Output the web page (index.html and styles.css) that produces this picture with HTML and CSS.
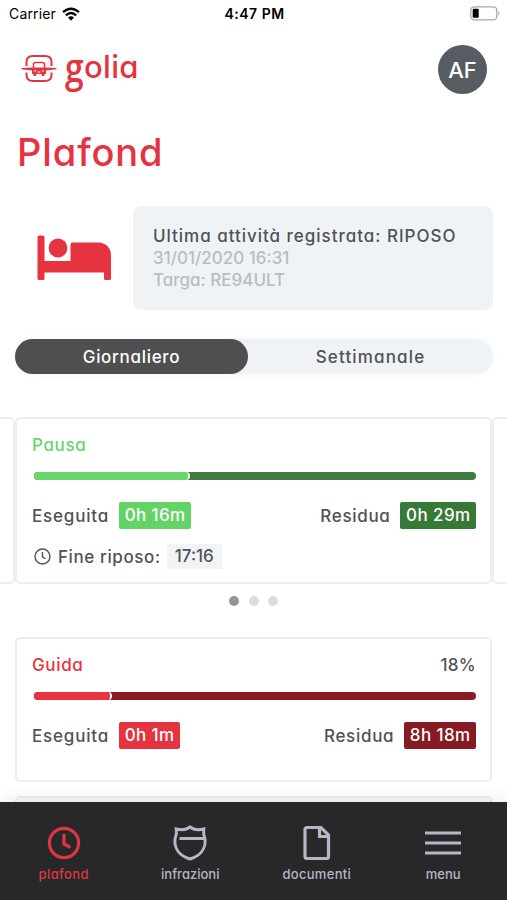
FILE: index.html
```html
<!DOCTYPE html>
<html lang="it">
<head>
<meta charset="utf-8">
<meta name="viewport" content="width=device-width">
<title>Plafond</title>
<link rel="stylesheet" href="styles.css">
</head>
<body>
<div class="app">
  <div class="status">
    <div class="carrier"><span>Carrier</span>
      <svg width="18" height="14" viewBox="0 0 18 14"><g fill="none" stroke="#000" stroke-width="2.4"><path d="M1 5.2Q9-1.8 17 5.2"/><path d="M3.8 8.4Q9 3.8 14.2 8.4"/></g><path d="M6 10.6Q9 8 12 10.6L9 13.8Z"/></svg>
    </div>
    <div class="time">4:47 PM</div>
    <svg class="battery" width="31" height="15" viewBox="0 0 31 15"><rect x=".8" y=".8" width="26" height="13" rx="3.5" fill="#fff" stroke="#aaa" stroke-width="1.3"/><rect x="2.7" y="2.8" width="6" height="9" rx="1" /><path d="M28.4 5q2 2.500 0 5z" fill="#aaa"/></svg>
  </div>
  <header class="header">
    <div class="logo">
      <svg width="36" height="30" viewBox="0 0 36 30"><g fill="none" stroke="#e23540" stroke-width="2"><path d="M5.500 12V8Q5.500 2 12 2H24Q30.500 2 30.500 8V12M5.500 18.500V21Q5.500 27 12 27H24Q30.500 27 30.500 21V18.500"/><path d="M12.500 14V10.500Q12.500 8.500 14.500 8.500H21.500Q23.500 8.500 23.500 10.500V14" stroke-width="1.500"/></g><path fill="#e23540" d="M.5 14Q7 13.600 12 13.600H24Q29 13.600 35.500 14V15.200L25 16.500V20H23.500V22H20.800V20H15.200V22H12.500V20H11V16.500L.5 15.200Z"/><path d="M13 16.900h2M21 16.900h2M16.500 18h3" stroke="#fff"/></svg>
      <span class="wordmark"><span class="wordmark-g">g</span>olia</span>
    </div>
    <div class="avatar">AF</div>
  </header>
  <h1 class="title">Plafond</h1>
  <section class="activity">
    <svg class="bed" width="76" height="46" viewBox="0 0 76 46" fill="#e63340"><path d="M2 .5H5.500Q7.500 .5 7.500 2V26H33.500V9.500Q33.500 7.500 35.500 7.500H62Q74 9 74 21V43.500Q74 45 72.500 45H68.500Q67 45 67 43.500V37.500H7.500V43.500Q7.500 45 6 45H2Q.5 45 .5 43.500V2Q.5 .5 2 .5Z"/><circle cx="21" cy="13" r="9.400"/></svg>
    <div class="activity-card">
      <div class="activity-name">Ultima attività registrata: RIPOSO</div>
      <div class="activity-date">31/01/2020 16:31</div>
      <div class="activity-plate">Targa: RE94ULT</div>
    </div>
  </section>
  <nav class="tabs"><div class="tab active">Giornaliero</div><div class="tab weekly">Settimanale</div></nav>
  <section class="carousel">
    <div class="card side"></div>
    <article class="card pause">
      <div class="card-head"><span class="card-title">Pausa</span></div>
      <div class="bar"><i class="done"></i></div>
      <div class="row"><div class="pair"><span class="label">Eseguita</span><b class="badge light">0h 16m</b></div><div class="pair"><span class="label residual">Residua</span><b class="badge dark">0h 29m</b></div></div>
      <div class="end"><svg width="17" height="17" viewBox="0 0 17 17" fill="none" stroke="#505254" stroke-width="1.400"><circle cx="8.500" cy="8.500" r="7.500"/><path d="M8.500 4V9L11.500 10.700"/></svg><span class="end-label">Fine riposo:</span><span class="clock">17:16</span></div>
    </article>
    <div class="card side"></div>
  </section>
  <div class="dots"><i class="on"></i><i></i><i></i></div>
  <article class="card drive">
    <div class="card-head"><span class="card-title">Guida</span><span class="percent">18%</span></div>
    <div class="bar"><i class="done"></i></div>
    <div class="row"><div class="pair"><span class="label">Eseguita</span><b class="badge light">0h 1m</b></div><div class="pair"><span class="label residual">Residua</span><b class="badge dark">8h 18m</b></div></div>
  </article>
  <div class="card next"></div>
  <nav class="bottom">
    <a class="item current"><svg width="36" height="36" viewBox="0 0 36 36"><circle cx="18" cy="18" r="14.600"/><path d="M18 9V19L24.500 22.500"/></svg><span class="n1">plafond</span></a>
    <a class="item"><svg width="36" height="36" viewBox="0 0 36 36"><path d="M4.300 4Q13 6 18 2Q23 6 31.700 4Q31 9 33 14C34 24 28 31 18 34C8 31 2 24 3 14Q5 9 4.300 4ZM7.500 13.500H32" stroke-width="3"/></svg><span class="n2">infrazioni</span></a>
    <a class="item"><svg width="36" height="36" viewBox="0 0 36 36"><path d="M8 2.500H22L29.500 10V31.500Q29.500 33.500 27.500 33.500H8Q6 33.500 6 31.500V4.500Q6 2.500 8 2.500ZM20.500 3V11.500H29"/></svg><span class="n3">documenti</span></a>
    <a class="item"><svg width="36" height="36" viewBox="0 0 36 36"><path d="M0 8H36M0 18H36M0 28H36"/></svg><span class="n4">menu</span></a>
  </nav>
</div>
</body>
</html>
```
FILE: styles.css
```css
* { box-sizing: border-box; }
body { margin: 0; background: #fff; }
.app { width: 507px; height: 900px; overflow: hidden; display: flex; flex-direction: column; font-family: Inter, "Liberation Sans", sans-serif; font-weight: 500; font-feature-settings: "cv11"; color: #505254; font-size: 17px; white-space: nowrap; }
.app > * { flex-shrink: 0; }
svg { display: block; flex-shrink: 0; }
.status { height: 27px; padding: 0 7px 0 9px; display: grid; grid-template-columns: 1fr auto 1fr; align-items: center; color: #000; font-feature-settings: normal; font-size: 14px; }
.carrier { display: flex; align-items: center; gap: 6px; font-weight: 400; letter-spacing: .15px; }
.time { font-weight: 600; letter-spacing: .5px; }
.battery { justify-self: end; margin-right: -1px; }
.header { height: 85px; padding: 0 20px 0 21px; display: flex; justify-content: space-between; align-items: center; }
.logo { display: flex; align-items: center; height: 50px; color: #e23540; }
.logo svg { margin-top: -1px; }
.wordmark { display: flex; align-items: baseline; margin-left: 8px; font-size: 31px; line-height: 50px; font-weight: 500; margin-top: -5px; letter-spacing: .3px; }
.wordmark-g { display: inline-block; width: 19px; line-height: 40px; font-family: "Open Sans", sans-serif; font-size: 39px; font-weight: 600; letter-spacing: 0; transform: translateY(4px) scaleX(.86); transform-origin: 0 50%; }
.avatar { width: 49px; height: 49px; border-radius: 50%; background: #565c61; color: #fff; font-size: 22px; font-weight: 500; display: flex; align-items: center; justify-content: center; }
.title { margin: 0; padding-left: 17px; height: 94px; line-height: 80px; font-size: 38px; font-weight: 550; letter-spacing: .9px; color: #e63340; }
.activity { height: 104px; display: flex; align-items: center; padding: 0 14px 0 37px; }
.activity-card { margin-left: 20px; flex: 1; height: 104px; border-radius: 8px; background: #eff3f6; padding: 19px 20px; line-height: 22px; }
.activity-name { letter-spacing: .98px; }
.activity-date, .activity-plate { color: #b9bdc0; }
.tabs { margin: 29px 14px 0 15px; height: 35px; border-radius: 18px; background: #eff3f6; display: flex; box-shadow: 0 0 8px #f3f6f9; }
.tab { flex: 1; display: flex; align-items: center; justify-content: center; }
.tab.active { flex: 0 0 233px; color: #fff; background: #4f4f51; border-radius: 18px; letter-spacing: .7px; }
.weekly { letter-spacing: 1.150px; }
.card { border: 2px solid #eee; border-radius: 5px; background: #fff; }
.carousel { margin-top: 43px; height: 167px; display: grid; grid-template-columns: 476px 477px 476px; margin-left: -461px; }
.pause { padding: 14px 14px 0 15px; }
.drive { padding: 14px 14px 0 15px; }
.card-head { height: 24px; line-height: 24px; display: flex; justify-content: space-between; }
.card-title { letter-spacing: .65px; }
.percent { letter-spacing: .3px; }
.pause .card-title { color: #68d66b; }
.drive .card-title { color: #e63340; }
.bar { height: 8px; margin: 15px 0 0 2px; border-radius: 4px; background: #3e7b3f; overflow: hidden; }
.done { display: block; height: 8px; width: 156px; border-radius: 0 5px 5px 0; border-right: 2px solid #fff; background: #69d66b; }
.drive .bar { background: #8a1a23; }
.drive .done { width: 78px; background: #e63340; }
.row { display: flex; justify-content: space-between; margin-top: 22px; height: 27px; }
.pair { display: flex; align-items: center; gap: 9.500px; }
.label { letter-spacing: .82px; }
.residual { letter-spacing: .7px; }
.badge { height: 27px; padding: 0 5.500px 0 6px; line-height: 27px; border-radius: 2px; color: #fff; font-weight: 500; letter-spacing: .4px; }
.light { background: #64d366; }
.dark { background: #377936; }
.drive .light { background: #e63340; }
.drive .dark { background: #861b23; }
.end { height: 25px; margin: 15px 0 0 2px; display: flex; align-items: center; }
.end-label { margin-left: 7px; letter-spacing: .6px; }
.clock { margin-left: 6px; height: 25px; line-height: 24px; padding: 0 8px; background: #f0f4f7; }
.dots { height: 34px; display: flex; justify-content: center; align-items: center; gap: 9.500px; }
.dots i { width: 10px; height: 10px; border-radius: 50%; background: #dcdcdc; }
.dots .on { background: #949494; }
.drive { margin: 19px 15px 0; height: 145px; }
.next { margin: 14px 15px 0; height: 40px; background: #fafafa; }
.bottom { height: 98px; margin-top: -34px; z-index: 1; background: #28282a; display: grid; grid-template-columns: repeat(4, 126.500px); padding-left: .5px; box-shadow: 0 -4px 14px rgba(0,0,0,.07); }
.item { display: flex; flex-direction: column; align-items: center; padding-top: 23px; color: #b7b6c7; font-size: 13px; line-height: 20px; gap: 3px; }
.item svg { fill: none; stroke: currentColor; stroke-width: 3.200; }
.item.current { color: #df3543; }
.n1 { letter-spacing: .4px; }
.n3 { letter-spacing: .3px; }
```
